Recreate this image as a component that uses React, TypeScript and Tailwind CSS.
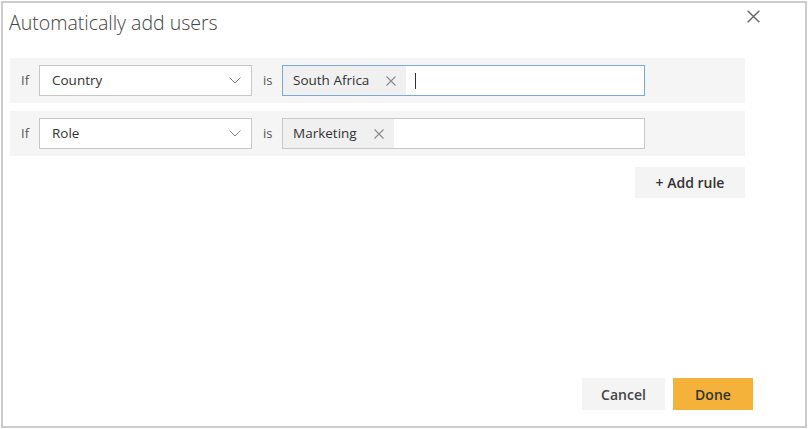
import React from "react";

const font = { fontFamily: '"Open Sans", "Noto Sans", sans-serif' };

function Chevron() {
  return (
    <svg width="12" height="7" viewBox="0 0 12 7" className="shrink-0">
      <path d="M0.5 0.5 L6 6 L11.5 0.5" fill="none" stroke="#8a8a8a" strokeWidth="1" />
    </svg>
  );
}

function SmallX({ size = 9, color = "#8a8a8a" }: { size?: number; color?: string }) {
  return (
    <svg width={size} height={size} viewBox="0 0 10 10" className="shrink-0">
      <path d="M0.5 0.5 L9.5 9.5 M9.5 0.5 L0.5 9.5" fill="none" stroke={color} strokeWidth="1.1" />
    </svg>
  );
}

function Rule({ field, value, focused }: { field: string; value: string; focused?: boolean }) {
  return (
    <div className="flex h-[45px] items-start bg-[#f5f5f5] pt-[7px] pl-[11px]">
      <span className="mt-[6px] w-[18px] text-[13px] text-[#555]">If</span>
      <div className="flex h-[31px] w-[213px] items-center justify-between border border-[#c8c8c8] bg-white pl-[12px] pr-[10px]">
        <span className="text-[13.5px] text-[#333]">{field}</span>
        <Chevron />
      </div>
      <span className="mt-[6px] ml-[11px] w-[19px] text-[13px] text-[#555]">is</span>
      <div
        className={
          "flex h-[31px] w-[363px] items-stretch border bg-white " +
          (focused ? "border-[#78abdc]" : "border-[#c8c8c8]")
        }
      >
        <div className="flex items-center bg-[#f0f0f0] pl-[10px] pr-[10px]">
          <span className="text-[13.5px] text-[#333]">{value}</span>
          <span className="ml-[17px] flex items-center">
            <SmallX size={10} />
          </span>
        </div>
        {focused && (
          <div className="flex items-center pl-[9px]">
            <div className="h-[16px] w-px bg-[#333]" />
          </div>
        )}
      </div>
    </div>
  );
}

export default function App() {
  return (
    <div className="h-[429px] w-[810px] bg-white p-px" style={font}>
      <div className="relative flex h-[427px] w-[806px] flex-col border-2 border-[#cccccc] bg-white">
        <button className="absolute right-[45px] top-[6px] flex h-[14px] w-[14px] items-center justify-center">
          <SmallX size={13} color="#666" />
        </button>
        <div className="pl-[6px] pt-[6px] text-[19.5px] font-light leading-[28px] text-[#444]">
          Automatically add users
        </div>
        <div className="mt-[21px] flex w-[742px] flex-col gap-[8px] pl-[7px]">
          <Rule field="Country" value="South Africa" focused />
          <Rule field="Role" value="Marketing" />
          <div className="mt-[3px] flex justify-end">
            <button className="h-[31px] w-[110px] bg-[#f4f4f4] text-[14px] font-semibold text-[#333]">
              + Add rule
            </button>
          </div>
        </div>
        <div className="mt-auto flex justify-end gap-[8px] pb-[16px] pr-[52px]">
          <button className="h-[32px] w-[83px] bg-[#f4f4f4] text-[14px] font-semibold text-[#444]">
            Cancel
          </button>
          <button className="h-[32px] w-[80px] bg-[#f4b23a] text-[14px] font-semibold text-[#333]">
            Done
          </button>
        </div>
      </div>
    </div>
  );
}
